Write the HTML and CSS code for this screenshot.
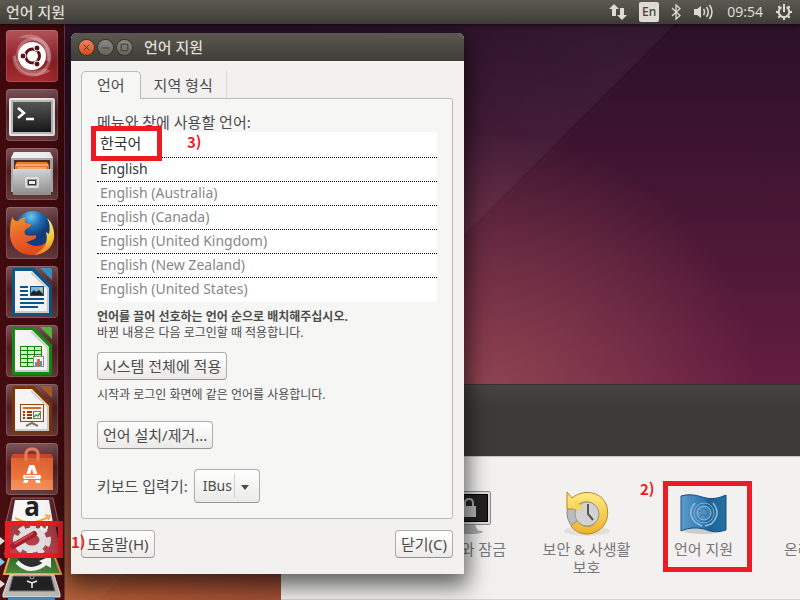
FILE: index.html
```html
<!DOCTYPE html>
<html lang="ko">
<head>
    <meta charset="UTF-8">
    <meta name="viewport" content="width=device-width, initial-scale=1.0">
    <title>언어 지원</title>
    <link rel="stylesheet" href="styles.css">
</head>
<body>
    <header class="panel">
        <span class="panel-title">언어 지원</span>
        <div class="indicators">
            <svg width="18" height="18" viewBox="0 0 18 18" aria-hidden="true">
                <path fill="#dfdbd2" d="M5 1L10 6H7V13H3V6H0ZM13 17L8 12H11V5H15V12H18Z"/>
            </svg>
            <span class="keyboard">En</span>
            <svg width="10" height="18" viewBox="0 0 10 18" aria-hidden="true">
                <path fill="none" stroke="#dfdbd2" stroke-width="1.300" d="M1 5L9 12.500L5 16V2L9 5.500L1 13"/>
            </svg>
            <svg width="22" height="18" viewBox="0 0 22 18" aria-hidden="true">
                <path fill="#dfdbd2" d="M1 6H4L8 3V15L4 12H1Z"/>
                <path fill="none" stroke="#dfdbd2" stroke-width="1.500" d="M10.500 6Q12.500 9 10.500 12M13.500 4Q17 9 13.500 14M16.500 2Q21.500 9 16.500 16"/>
            </svg>
            <time>09:54</time>
            <svg width="18" height="18" viewBox="0 0 18 18" aria-hidden="true">
                <g fill="none" stroke="#dfdbd2" stroke-width="2">
                    <path d="M6.500 4.200A5.300 5.300 0 1 0 11.500 4.200"/>
                    <path d="M9 1V9M1 9H4M14 9H17M9 14V17M3.300 14.700L5.300 12.700M14.700 14.700L12.700 12.700M3.300 3.300L5.300 5.300M14.700 3.300L12.700 5.300"/>
                </g>
            </svg>
        </div>
    </header>

    <main class="desktop">
        <nav class="launcher">
            <button class="tile tile-dash" aria-label="Dash">
                <svg viewBox="0 0 52 52">
                    <g fill="none" stroke="#fff" stroke-opacity=".25" stroke-width="3">
                        <path d="M13 31C8 16 20 6 33 10C45 15 47 30 39 39M40 17C48 31 40 46 25 45C15 44 8 37 8 26"/>
                    </g>
                    <path d="M12 8C28 -2 48 11 44 32L40 30C43 17 31 6 12 8Z" fill="#fff" fill-opacity=".25"/>
                    <path d="M9 23C5 40 25 53 45 41L38 38C27 44 13 40 9 23Z" fill="#fff" fill-opacity=".25"/>
                    <circle cx="26" cy="26" r="14" fill="#fff"/>
                    <circle cx="26.500" cy="26" r="7" fill="none" stroke="#5e1216" stroke-width="3"/>
                    <g fill="#5e1216" stroke="#fff"><circle cx="17" cy="26" r="3"/><circle cx="31" cy="18" r="3"/><circle cx="31" cy="34" r="3"/></g>
                </svg>
            </button>
            <button class="tile" aria-label="터미널">
                <svg viewBox="0 0 52 52">
                    <defs><linearGradient id="screen" x2="0" y2="1"><stop stop-color="#555"/><stop offset="1" stop-color="#181818"/></linearGradient></defs>
                    <rect x="3" y="9" width="46" height="38" rx="2" fill="#e8e8e6"/>
                    <rect x="5" y="11" width="42" height="34" fill="#b9b9b7"/>
                    <rect x="7" y="13" width="38" height="30" fill="url(#screen)"/>
                    <path d="M12 19L18 24L12 29M20 30H28" fill="none" stroke="#fff" stroke-width="2.500"/>
                </svg>
            </button>
            <button class="tile" aria-label="파일">
                <svg viewBox="0 0 52 52">
                    <defs><linearGradient id="cabinet" x2="0" y2="1"><stop stop-color="#d4d4d4"/><stop offset="1" stop-color="#8e8e8e"/></linearGradient></defs>
                    <path d="M8 4H44L47 10V44H5V10Z" fill="#aaa"/>
                    <path d="M8 4H44L47 10H5Z" fill="#eee"/>
                    <rect x="8" y="12" width="36" height="13" fill="#492b24"/>
                    <path d="M9 17L11 14H41L43 17V21H9Z" fill="#e77a35"/>
                    <path d="M10 17H42M12 20H40" stroke="#ffd6a3" stroke-width="1"/>
                    <path d="M7 21H45V47H7Z" fill="url(#cabinet)"/>
                    <rect x="20" y="30" width="12" height="9" rx="1" fill="#999" stroke="#ddd" stroke-width="2"/>
                    <rect x="22.500" y="32.500" width="7" height="4" fill="#eee" stroke="#333"/>
                </svg>
            </button>
            <button class="tile" aria-label="Firefox">
                <svg viewBox="0 0 52 52">
                    <defs>
                        <radialGradient id="globe" cx=".45" cy=".15"><stop stop-color="#6fc7ee"/><stop offset=".5" stop-color="#2272b8"/><stop offset="1" stop-color="#123c7c"/></radialGradient>
                        <linearGradient id="fox" x2=".4" y2="1"><stop stop-color="#f39a2c"/><stop offset=".5" stop-color="#e8642a"/><stop offset="1" stop-color="#dd4a1c"/></linearGradient>
                        <linearGradient id="tail" x2="0" y2="1"><stop stop-color="#fff3a0"/><stop offset=".6" stop-color="#fbc934"/><stop offset="1" stop-color="#ec7a22"/></linearGradient>
                    </defs>
                    <circle cx="27" cy="23" r="19" fill="url(#globe)"/>
                    <path d="M7 9C6 12 9 14 12 14Q16 10 20 10Q18 13 19 16L25 17Q26 19 20 22Q17 25 20 28Q25 29 30 28Q31 32 26 33Q21 35 20 35Q29 42 38 37Q44 33 44 25L48 29C47 41 38 48 26 48C12 48 3 38 4 25Q4 14 7 9Z" fill="url(#fox)"/>
                    <path d="M41 11C46 15 49 23 48 31C46 42 38 47 28 48C37 43 43 37 40 25L43 27Q45 18 41 11Z" fill="url(#tail)"/>
                </svg>
            </button>
            <button class="tile" aria-label="Writer">
                <svg viewBox="0 0 52 52">
                    <path d="M8 2H28L46 20V48Q46 50 44 50H8Q6 50 6 48V4Q6 2 8 2Z" fill="#0c5587"/>
                    <path d="M9 5H26L43 22V47H9Z" fill="#f4f4f4"/>
                    <path d="M26 5V6L42 22H43V47H9V45H41V23L25 8Z" fill="#ccc"/>
                    <path d="M34 2H44Q46 2 46 4V14Z" fill="#3e91c4"/>
                    <path d="M14 21H22M14 25H22M14 29H22M14 33H38M14 37H38M14 41H32" stroke="#0c5587" stroke-width="2"/>
                    <rect x="24.500" y="20.500" width="13" height="9" fill="#79b9dc" stroke="#0c5587"/>
                    <path d="M25 29V27L28 24L30 26L33 24L37 28V29Z" fill="#222"/><circle cx="35" cy="23" r="1.500" fill="#eac84c"/>
                </svg>
            </button>
            <button class="tile" aria-label="Calc">
                <svg viewBox="0 0 52 52">
                    <path d="M8 2H28L46 20V48Q46 50 44 50H8Q6 50 6 48V4Q6 2 8 2Z" fill="#158a11"/>
                    <path d="M9 5H26L43 22V47H9Z" fill="#f4f4f4"/>
                    <path d="M26 5V6L42 22H43V47H9V45H41V23L25 8Z" fill="#ccc"/>
                    <path d="M34 2H44Q46 2 46 4V14Z" fill="#55b83d"/>
                    <rect x="14" y="21" width="22" height="20" fill="#cdf6bb"/>
                    <path d="M14.500 21V41M21.500 21V41M28.500 21V41M35.500 21V41M14 21.500H36M14 25.500H36M14 29.500H36M14 33.500H36M14 37.500H36M14 41.500H36" stroke="#15850f"/>
                    <rect x="27.500" y="31.500" width="10" height="10" fill="#fff" stroke="#888"/>
                    <path d="M29 37H31V41H29ZM34 36H36V41H34Z" fill="#4b95d6"/><path d="M31 34H34V41H31Z" fill="#e2672a"/>
                </svg>
            </button>
            <button class="tile" aria-label="Impress">
                <svg viewBox="0 0 52 52">
                    <path d="M8 2H28L46 20V48Q46 50 44 50H8Q6 50 6 48V4Q6 2 8 2Z" fill="#7c3508"/>
                    <path d="M9 5H26L43 22V47H9Z" fill="#f4f4f4"/>
                    <path d="M26 5V6L42 22H43V47H9V45H41V23L25 8Z" fill="#ccc"/>
                    <path d="M34 2H44Q46 2 46 4V14Z" fill="#aa5a2c"/>
                    <path d="M26 36V39L20 42M26 39L32 42" fill="none" stroke="#777" stroke-width="2"/>
                    <rect x="14.500" y="20.500" width="23" height="17" fill="#fff1e5" stroke="#9b4112"/>
                    <path d="M17 24H35" stroke="#cf6b2c" stroke-width="2"/>
                    <path d="M17 28H19M17 31H19M17 34H19M21 28H26M21 31H26M21 34H26" stroke="#943b0b" stroke-width="2"/>
                    <rect x="27.500" y="27.500" width="7" height="7" fill="#fff" stroke="#777"/><path d="M28 33L30 31L32 32L34 29" fill="none" stroke="#31a12d" stroke-width="1.500"/>
                </svg>
            </button>
            <button class="tile" aria-label="소프트웨어 센터">
                <svg viewBox="0 0 52 52">
                    <defs><linearGradient id="bag" x2="0" y2="1"><stop stop-color="#dc5c30"/><stop offset="1" stop-color="#f58241"/></linearGradient></defs>
                    <path d="M7 11H45L47 15V47H5V15Z" fill="url(#bag)"/>
                    <path d="M7 11H45L47 15H5Z" fill="#c84a28"/>
                    <path d="M5 37H47V47H5Z" fill="#fff" fill-opacity=".12"/>
                    <path d="M20 18V10Q21 6 26 6Q31 6 32 10V18" fill="none" stroke="#e3805c" stroke-width="3"/>
                    <text x="26" y="40" class="bag-letter">A</text>
                    <rect x="16.500" y="31.500" width="19" height="5" rx="2" fill="#fff" stroke="#ee7439"/>
                    <path d="M19 34H29" stroke="#ee7439"/>
                </svg>
            </button>
            <!-- icons folded together at the bottom of the launcher -->
            <svg class="folded" viewBox="0 0 65 104" aria-hidden="true">
                <defs>
                    <linearGradient id="redTile" x2="0" y2="1"><stop stop-color="#9a3b43"/><stop offset="1" stop-color="#c3414d"/></linearGradient>
                    <linearGradient id="greenTile" x2="0" y2="1"><stop stop-color="#2c6428"/><stop offset="1" stop-color="#4d8a3e"/></linearGradient>
                </defs>
                <path d="M12 2H53L59 30H5Z" fill="#5a2529" stroke="#946165"/>
                <path d="M15 4H49L53 27H11Z" fill="#f6f6f6"/>
                <text x="32" y="20" class="store-letter">a</text>
                <path d="M15 22Q31 31 48 21" fill="none" stroke="#f6a12b" stroke-width="2"/>
                <path d="M45 19L50 20L48 24" fill="none" stroke="#f6a12b" stroke-width="1.500"/>
                <path d="M10 59H54L61 78H4Z" fill="url(#greenTile)" stroke="#f0a24a" stroke-width="2"/>
                <ellipse cx="32" cy="61" rx="14" ry="10" fill="#2b2e2b"/>
                <path d="M17 66Q31 80 47 66" fill="none" stroke="#f3f3f3" stroke-width="4"/>
                <path d="M39 65L51 60V72Z" fill="#f3f3f3"/>
                <path d="M9 27H55L61 59H4Z" fill="url(#redTile)"/>
                <ellipse cx="32" cy="44" rx="16" ry="13" fill="none" stroke="#dedede" stroke-width="6" stroke-dasharray="6 5"/>
                <ellipse cx="32" cy="44" rx="11" ry="9" fill="none" stroke="#dedede" stroke-width="7"/>
                <path d="M35 37L42 32" stroke="#dedede" stroke-width="3"/><circle cx="44" cy="31" r="3" fill="none" stroke="#eee" stroke-width="2"/>
                <path d="M13 50L34 38" stroke="#a31c28" stroke-width="6" stroke-linecap="round"/>
                <path d="M14 48L33 37" stroke="#dc4852" stroke-width="2"/>
                <path d="M10 79H54L60 98V101H3V98Z" fill="#bbb9b3" stroke="#e3e2de"/>
                <path d="M13 80H51L55 95H9Z" fill="#222" stroke="#777"/>
                <path d="M27 85L32 87L37 85M32 87V92" fill="none" stroke="#eee" stroke-width="1.500"/><circle cx="32" cy="81" r="2" fill="none" stroke="#aaa"/>
                <path d="M8 101H55V104H8Z" fill="#4288bd"/>
                <path d="M0 41L5 45L0 49ZM0 84L5 88L0 92Z" fill="#ddd"/><path d="M0 62L5 66L0 70Z" fill="#7fc8ee"/>
            </svg>
            <div class="mark mark-launcher"></div>
        </nav>

        <div class="workspace">
            <section class="settings">
                <div class="settings-bar"></div>
                <div class="settings-grid">
                    <a class="setting" href="#">
                        <svg width="48" height="48" viewBox="0 0 48 48">
                            <ellipse cx="23" cy="43" rx="14" ry="2" fill="#aaa"/>
                            <path d="M16 36H29L32 42H13Z" fill="#aaa"/>
                            <rect x=".5" y="2.500" width="44" height="33" rx="1" fill="#ddd" stroke="#888"/>
                            <rect x="3.500" y="5.500" width="38" height="27" fill="#222" stroke="#000"/>
                            <rect x="16" y="17" width="14" height="11" fill="#bbb"/>
                            <path d="M19 17V14Q19 10 23 10Q27 10 27 14V17" fill="none" stroke="#aaa" stroke-width="2"/>
                        </svg>
                        <span>밝기와 잠금</span>
                    </a>
                    <a class="setting" href="#">
                        <svg width="48" height="48" viewBox="0 0 48 48">
                            <defs><linearGradient id="gold" x2="0" y2="1"><stop stop-color="#ffed83"/><stop offset="1" stop-color="#eeb22e"/></linearGradient></defs>
                            <ellipse cx="24" cy="42" rx="23" ry="5" fill="#e0e0df"/>
                            <circle cx="24" cy="24" r="20" fill="#bbb" stroke="#888"/>
                            <path d="M4 3L9 9C20 0 37 2 43 15C49 31 38 45 24 45Q14 45 8 37L14 32Q20 39 28 37C39 31 38 16 26 13Q19 12 16 15L21 20H4Z" fill="url(#gold)" stroke="#bc8421" stroke-linejoin="round"/>
                            <circle cx="24" cy="25" r="12" fill="#d2d2d2" stroke="#999"/>
                            <path d="M13 11L16 15L21 20H10Z" fill="#f8d45c"/>
                            <path d="M25 15V25L30 31" fill="none" stroke="#555" stroke-width="2"/>
                        </svg>
                        <span>보안 &amp; 사생활 보호</span>
                    </a>
                    <a class="setting" href="#">
                        <svg width="48" height="48" viewBox="0 0 48 48">
                            <defs><linearGradient id="flag"><stop stop-color="#5d9aca"/><stop offset=".5" stop-color="#2e78b1"/><stop offset=".6" stop-color="#1c649b"/><stop offset="1" stop-color="#266f9f"/></linearGradient></defs>
                            <ellipse cx="23" cy="42" rx="19" ry="3" fill="#ccc"/>
                            <path d="M1 7Q11 4 22 8Q34 12 46 6V41Q35 45 24 40Q12 37 1 42Z" fill="url(#flag)" stroke="#17517e"/>
                            <g fill="none" stroke="#96bdd9">
                                <path d="M15 14Q6 24 16 34L22 37M33 14Q42 25 31 35L25 37" stroke-width="1.500"/>
                                <circle cx="24" cy="24" r="10" stroke-opacity=".8"/>
                                <circle cx="24" cy="24" r="7" fill="#96bdd9" fill-opacity=".35"/>
                                <path d="M19 23Q24 16 29 24M20 29L22 25L26 28L29 23" stroke="#2e78b1"/>
                            </g>
                        </svg>
                        <span>언어 지원</span>
                    </a>
                    <a class="setting" href="#">
                        <svg width="48" height="48" viewBox="0 0 48 48"></svg>
                        <span>온라인 계정</span>
                    </a>
                </div>
                <div class="mark mark-setting"></div>
                <strong class="step step-setting">2)</strong>
            </section>

            <section class="dialog">
                <div class="titlebar">
                    <button class="control control-close" aria-label="닫기"><svg viewBox="0 0 16 16"><path d="M5 5L11 11M11 5L5 11"/></svg></button>
                    <button class="control" aria-label="최소화"><svg viewBox="0 0 16 16"><path d="M4 8.500H12"/></svg></button>
                    <button class="control" aria-label="최대화"><svg viewBox="0 0 16 16"><path d="M4.500 4.500H11.500V11.500H4.500Z"/></svg></button>
                    <h1>언어 지원</h1>
                </div>
                <div class="dialog-body">
                    <div class="tabs">
                        <button class="tab tab-active">언어</button>
                        <button class="tab">지역 형식</button>
                    </div>
                    <div class="page">
                        <p class="list-label">메뉴와 창에 사용할 언어:</p>
                        <ul class="languages">
                            <li class="chosen">한국어</li>
                            <li class="chosen">English</li>
                            <li>English (Australia)</li>
                            <li>English (Canada)</li>
                            <li>English (United Kingdom)</li>
                            <li>English (New Zealand)</li>
                            <li>English (United States)</li>
                        </ul>
                        <p class="hint"><b>언어를 끌어 선호하는 언어 순으로 배치해주십시오.</b><br>바뀐 내용은 다음 로그인할 때 적용합니다.</p>
                        <button class="button">시스템 전체에 적용</button>
                        <p class="hint hint-apply">시작과 로그인 화면에 같은 언어를 사용합니다.</p>
                        <button class="button">언어 설치/제거...</button>
                        <div class="input-method">
                            <label for="method">키보드 입력기:</label>
                            <div class="select">
                                <select id="method"><option>IBus</option></select>
                            </div>
                        </div>
                        <div class="mark mark-language"></div>
                        <strong class="step step-language">3)</strong>
                    </div>
                    <div class="actions">
                        <button class="button">도움말(H)</button>
                        <button class="button">닫기(C)</button>
                    </div>
                </div>
                <strong class="step step-launcher">1)</strong>
            </section>
        </div>
    </main>
</body>
</html>
```
FILE: styles.css
```css
* {
    box-sizing: border-box;
}

body {
    margin: 0;
    height: 100vh;
    display: flex;
    flex-direction: column;
    overflow: hidden;
    font-family: "Noto Sans", "Noto Sans CJK KR", sans-serif;
    font-size: 15px;
    line-height: 18px;
    color: #4c4c4c;
}

button,
select {
    font: inherit;
    color: inherit;
    margin: 0;
    padding: 0;
    border: none;
    background: none;
}

p {
    margin: 0;
}

svg {
    display: block;
}

/* Top panel */
.panel {
    flex: none;
    height: 24px;
    padding: 0 7px 0 6px;
    display: flex;
    align-items: center;
    justify-content: space-between;
    background: linear-gradient(#5c5a50, #3d3c37);
    color: #dfdbd2;
    position: relative;
    box-shadow: 0 1px 4px rgba(0, 0, 0, 0.6);
    z-index: 1;
}

.panel-title {
    font-weight: 500;
}

.indicators {
    display: flex;
    align-items: center;
    gap: 12px;
    font-size: 14px;
}

.keyboard {
    width: 20px;
    height: 20px;
    border-radius: 2px;
    background: #dfdbd2;
    color: #45433e;
    font-size: 12px;
    font-weight: 500;
    line-height: 20px;
    text-align: center;
}

.desktop {
    flex: 1;
    min-height: 0;
    display: flex;
    background:
        linear-gradient(135deg, transparent 20%, rgba(255, 255, 255, 0.04) 49%, transparent 49%),
        radial-gradient(circle at 10% 100%, #b35b33, transparent 30%),
        radial-gradient(circle at 60% 68%, rgba(155, 78, 84, 0.85), transparent 46%),
        linear-gradient(to bottom, #2a1028, #4a1735 35%, #661d42 65%, #9a4a35);
}

/* Launcher */
.launcher {
    position: relative;
    flex: none;
    width: 65px;
    padding: 6px 6px 0;
    display: flex;
    flex-direction: column;
    gap: 7px;
    background: linear-gradient(#3f080d, #420b0f 70%, #4b1010);
    border-right: 1px solid #70383b;
}

.tile {
    flex: none;
    width: 52px;
    height: 52px;
    border-radius: 4px;
    background: linear-gradient(rgba(255, 255, 255, 0.3), rgba(255, 255, 255, 0.08) 45%, rgba(255, 255, 255, 0.2));
    box-shadow: inset 0 0 0 1px rgba(255, 255, 255, 0.15);
}

.tile-dash {
    background: linear-gradient(#b2535a, #8c2026 60%, #a62e31);
}

.folded {
    flex: none;
    width: 65px;
    height: 104px;
    margin: -6px 0 0 -6px;
}

.bag-letter,
.store-letter {
    font-family: "Noto Sans", sans-serif;
    font-weight: 700;
    text-anchor: middle;
}

.bag-letter {
    font-size: 25px;
    fill: #fff;
}

.store-letter {
    font-size: 26px;
    fill: #222;
}

.workspace {
    position: relative;
    flex: 1;
}

/* System settings window */
.settings {
    position: absolute;
    top: 360px;
    right: 0;
    bottom: 0;
    left: 216px;
    overflow: hidden;
    display: flex;
    flex-direction: column;
    background: #f2f1f0;
}

.settings-bar {
    flex: none;
    height: 73px;
    background: linear-gradient(#454440, #3c3b37 30%);
    border-top: 1px solid #34332f;
    border-bottom: 1px solid #c9c7c3;
}

.settings-grid {
    flex: 1;
    display: flex;
    padding: 32px 0 0 130px;
    border-bottom: 1px solid #d5d3d0;
}

.setting {
    flex: none;
    width: 117px;
    padding: 0 12px;
    display: flex;
    flex-direction: column;
    align-items: center;
    gap: 3px;
    color: #777;
    text-align: center;
    text-decoration: none;
}

/* Language support window */
.dialog {
    position: absolute;
    top: 9px;
    left: 6px;
    width: 393px;
    border-radius: 6px 6px 0 0;
    background: #f2f1f0;
    box-shadow: 0 8px 22px 4px rgba(0, 0, 0, 0.6);
}

.titlebar {
    height: 28px;
    padding-left: 8px;
    display: flex;
    align-items: center;
    gap: 4px;
    border-radius: 6px 6px 0 0;
    background: linear-gradient(#5b584f, #3e3d39);
    color: #dfdbd2;
}

.titlebar h1 {
    margin: 0 0 0 8px;
    font-size: 15px;
    font-weight: 500;
}

.control {
    width: 15px;
    height: 15px;
    border-radius: 50%;
    background: linear-gradient(#8b8981, #656359);
    box-shadow: 0 0 0 1px #34332f;
}

.control svg {
    fill: none;
    stroke: #3c3b37;
}

.control-close {
    background: linear-gradient(#f6835e, #db4816);
}

.dialog-body {
    padding: 10px 11px 16px 10px;
}

.tabs {
    display: flex;
    align-items: flex-end;
}

.tab {
    height: 27px;
    padding: 0 13px;
    border-right: 1px solid #dddcd9;
}

.tab-active {
    position: relative;
    height: 28px;
    margin-bottom: -1px;
    padding: 0 15px 2px;
    border: 1px solid #bdbbb7;
    border-bottom: none;
    border-radius: 5px 5px 0 0;
    background: #f6f6f5;
    z-index: 1;
}

.page {
    position: relative;
    padding: 14px 15px 15px;
    border: 1px solid #bdbbb7;
    border-radius: 0 3px 3px 3px;
    background: #f6f6f5;
}

.list-label {
    height: 19px;
}

.languages {
    margin: 0 0 7px;
    padding: 0;
    list-style: none;
    background: #fff;
    color: #888;
    font-size: 14px;
}

.languages li {
    height: 24px;
    padding: 0 3px;
    line-height: 21px;
    border-bottom: 1px dotted #000;
}

.languages li:first-child {
    height: 26px;
    font-size: 15px;
    line-height: 22px;
}

.languages li:last-child {
    border-bottom: none;
}

.languages .chosen {
    color: #333;
}

.hint {
    margin-bottom: 11px;
    font-size: 12px;
    line-height: 16px;
}

.hint-apply {
    margin: 7px 0 18px;
}

.button {
    height: 28px;
    padding: 0 5px;
    border: 1px solid #b0aeaa;
    border-bottom-color: #97958f;
    border-radius: 4px;
    background: linear-gradient(#fff, #ebeae8);
}

.input-method {
    margin-top: 20px;
    display: flex;
    align-items: center;
    gap: 6px;
}

.select {
    position: relative;
}

.select select {
    width: 66px;
    height: 34px;
    padding-left: 8px;
    appearance: none;
    border: 1px solid #b0aeaa;
    border-bottom-color: #97958f;
    border-radius: 4px;
    background: linear-gradient(#fff, #ebeae8);
    font-size: 14px;
}

.select::before {
    content: "";
    position: absolute;
    top: 5px;
    right: 25px;
    height: 24px;
    border-left: 1px solid #d5d3d0;
    pointer-events: none;
}

.select::after {
    content: "";
    position: absolute;
    top: 16px;
    right: 11px;
    border: 4px solid transparent;
    border-top: 5px solid #4c4c4c;
    border-bottom: none;
    pointer-events: none;
}

.actions {
    margin-top: 11px;
    display: flex;
    justify-content: space-between;
}

/* Numbered steps */
.mark {
    position: absolute;
    border: 5px solid #ed1c24;
    pointer-events: none;
}

.mark-launcher {
    top: 497px;
    left: 5px;
    width: 58px;
    height: 37px;
}

.mark-setting {
    top: 97px;
    left: 382px;
    width: 89px;
    height: 91px;
}

.mark-language {
    top: 27px;
    left: 9px;
    width: 71px;
    height: 35px;
}

.step {
    position: absolute;
    color: #ed1c24;
    font-family: "Noto Sans CJK KR", sans-serif;
    font-size: 15px;
}

.step-launcher {
    top: 500px;
    left: 0;
}

.step-setting {
    top: 96px;
    left: 359px;
}

.step-language {
    top: 34px;
    left: 105px;
}
```
